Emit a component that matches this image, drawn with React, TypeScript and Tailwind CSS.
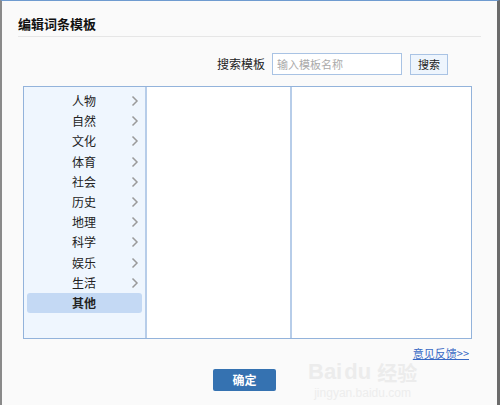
import React from "react";

const items = ["人物", "自然", "文化", "体育", "社会", "历史", "地理", "科学", "娱乐", "生活", "其他"];

function Chevron() {
  return (
    <svg width="8" height="12" viewBox="0 0 8 12" className="block">
      <path d="M1.5 1.5 L6 6 L1.5 10.5" fill="none" stroke="#9a9a9a" strokeWidth="1.5" />
    </svg>
  );
}

export default function App() {
  return (
    <div
      className="relative w-[500px] h-[405px] bg-[#fafafa] border-l-2 border-l-[#8a8a8a] border-t border-t-[#6f9bd0] border-r-[3px] border-r-[#6b6b6b] overflow-hidden"
      style={{ fontFamily: '"Noto Sans CJK SC", "Noto Sans", sans-serif' }}
    >
      <div className="pl-4 pr-4 pt-[12px]">
        <div className="h-[24px] flex items-center border-b border-[#e6e6e6] text-[13px] font-bold text-[#111] leading-none pb-[2px]">
          编辑词条模板
        </div>
      </div>
      <div className="flex items-center justify-end pr-[49px] mt-[16px] h-[22px]">
        <span className="text-[12px] text-[#222] mr-[7px]">搜索模板</span>
        <div className="w-[130px] h-[22px] border border-[#a9c3e4] bg-white flex items-center px-[4px] text-[11px] text-[#aaa]">
          输入模板名称
        </div>
        <div className="ml-[8px] w-[38px] h-[21px] border border-[#a9c3e4] bg-[#eef5fd] flex items-center justify-center text-[11px] text-[#222]">
          搜索
        </div>
      </div>
      <div className="ml-[21px] mt-[11px] w-[449px] h-[253px] border border-[#93b3db] flex">
        <div className="w-[123px] bg-[#eff6fe] border-r-2 border-[#b7cde9] pt-[4px] px-[3px]">
          {items.map((it, i) => {
            const sel = i === items.length - 1;
            return (
              <div
                key={it}
                className={`h-[20.2px] flex items-center rounded-[3px] ${sel ? "bg-[#c4d9f4] font-bold" : ""}`}
              >
                <span className="w-[112px] pl-[45px] text-[12px] text-[#222] leading-none">{it}</span>
                {!sel && (
                  <span className="-ml-[8px]">
                    <Chevron />
                  </span>
                )}
              </div>
            );
          })}
        </div>
        <div className="w-[145px] bg-white border-r-2 border-[#b7cde9]"></div>
        <div className="flex-1 bg-white"></div>
      </div>
      <div className="flex justify-end pr-[28px] mt-[9px]">
        <span className="text-[11px] text-[#3768c4] underline leading-none">意见反馈&gt;&gt;</span>
      </div>
      <div className="flex justify-center mt-[10px]">
        <div className="ml-[-10px] w-[63px] h-[22px] bg-[#3572b1] rounded-[2px] flex items-center justify-center text-white text-[12px] font-bold">
          确定
        </div>
      </div>
      <div className="absolute left-[306px] top-[360px] flex flex-col items-center pointer-events-none">
        <div className="flex items-end text-[#ececec] text-[22px] font-bold leading-none" style={{ fontFamily: '"Liberation Sans", sans-serif' }}>
          <span>Bai</span>
          <span className="ml-[2px]">du</span>
          <span className="ml-[6px] text-[20px]" style={{ fontFamily: '"Noto Sans CJK SC", sans-serif' }}>经验</span>
        </div>
        <div className="text-[#ededed] text-[12px] leading-none mt-[4px]" style={{ fontFamily: '"Liberation Sans", sans-serif' }}>
          jingyan.baidu.com
        </div>
      </div>
    </div>
  );
}
